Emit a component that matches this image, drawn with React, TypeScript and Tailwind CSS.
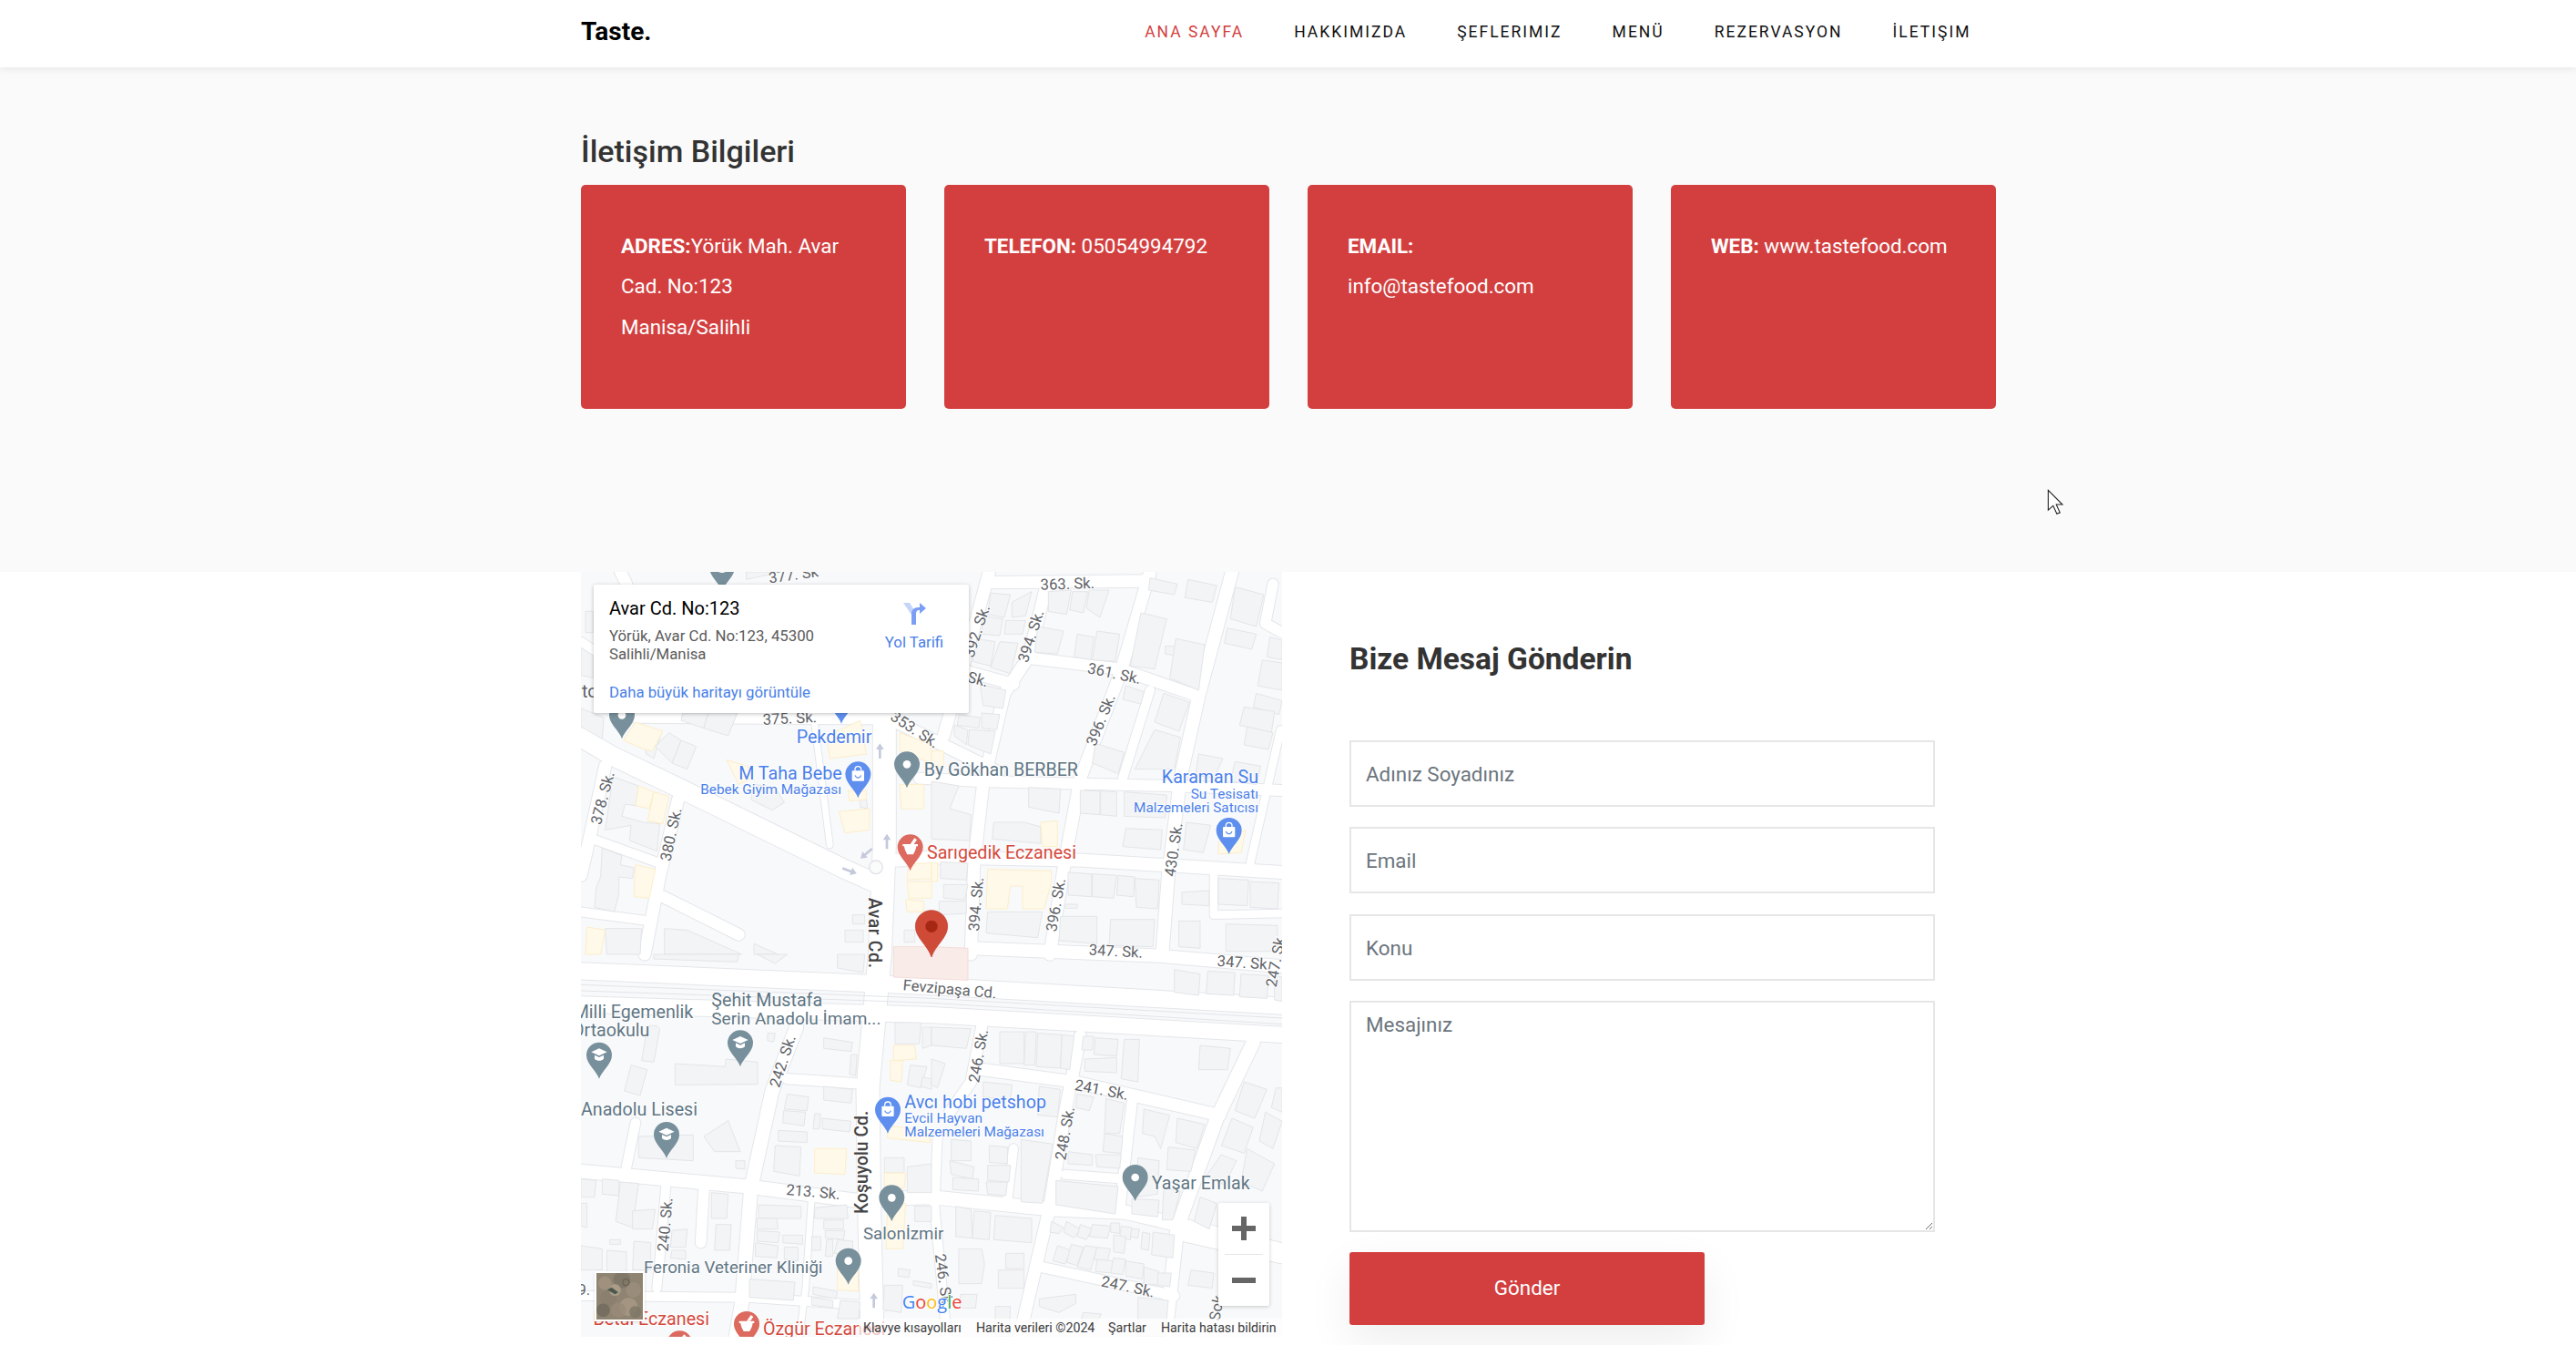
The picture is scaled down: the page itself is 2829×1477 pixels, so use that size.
import React from "react";

const gray = "#f3f4f6";
type P = number[];
const Q1: P[] = [
  [15,130,40,130,40,200,15,200],[0,250,40,275,40,350,0,340],[0,450,40,465,75,480,70,550,0,510],
  [210,565,265,530,240,615,215,600],[245,575,290,530,330,555,300,630],[300,630,330,555,380,575,350,650],
  [335,465,420,465,405,515,330,490],[405,515,420,465,515,465,485,540],[570,700,640,710,670,760,630,785,560,750],
  [105,675,190,705,180,770,145,765,135,805,205,825,260,830,250,920,160,885,165,835,80,850],
  [70,910,135,935,130,965,175,975,170,1010,125,1005,125,1060,110,1120,45,1105,50,1040,65,1005],
  [275,1175,350,1180,530,1260,275,1260],[570,1225,650,1260,570,1260],[80,1175,200,1175,195,1260,85,1260],
  [895,1130,935,1130,935,1160,895,1160],[870,1180,930,1180,930,1220,870,1220],[1065,1180,1100,1180,1100,1220,1065,1220],
  [920,750,940,750,945,780,920,775],[545,0,660,0,545,25],
];
const Q1Y: P[] = [
  [140,555,180,495,270,525,235,590,210,585],[190,705,240,725,225,780,180,770],[240,725,290,740,270,830,220,820],
  [180,965,245,980,225,1075,175,1070],[20,1170,80,1180,65,1260,15,1260],[810,540,920,490,940,600,820,615],
  [1050,530,1155,570,1155,630,1050,590],[480,620,550,640,560,680,520,700],[880,720,940,720,940,750,885,755],
  [850,790,950,780,950,850,870,860],[1050,700,1130,700,1130,780,1055,780],[1080,960,1155,960,1155,1010,1075,1015],
  [1075,1020,1155,1020,1155,1075,1080,1075],[1070,1080,1130,1085,1130,1120,1075,1120],
];
const Q2: P[] = [
  [195,70,260,75,240,150,185,140],[170,145,235,155,225,210,165,205],[265,100,330,65,310,145,265,150],[245,160,310,160,300,205,240,205],
  [150,220,210,230,195,310,135,295],[225,230,285,235,260,335,195,315],[385,65,460,60,445,140,385,130],[465,65,515,65,500,135,455,125],
  [520,60,585,60,555,150,510,120],[350,180,435,195,415,270,340,265],[480,205,535,215,525,290,470,280],[545,195,620,205,605,295,530,290],
  [690,135,775,155,735,320,655,310],[720,20,810,40,800,75,715,60],[845,25,940,45,925,100,835,85],[770,245,800,245,800,275,770,270],
  [805,220,900,240,880,390,785,350],[1000,50,1095,75,1070,180,985,155],[975,185,1070,205,1055,255,965,235],[1115,215,1155,225,1155,290,1105,280],
  [1090,290,1155,300,1155,390,1075,375],[1070,400,1155,425,1145,470,1060,445],[1030,445,1060,450,1130,460,1120,530,1015,505],[1040,510,1125,530,1110,585,1030,570],
  [640,375,700,395,690,435,630,420],[765,400,850,430,815,525,735,495],[735,520,820,545,800,650,670,650],[540,565,635,595,615,665,530,630],
  [160,370,245,390,235,450,170,440],[90,470,160,480,155,515,85,505],[165,465,225,470,215,520,165,515],[75,505,120,520,115,570,75,540],[125,520,210,525,195,600,120,570],
  [880,600,960,615,930,680,870,670],[1000,625,1085,640,1070,700,985,690],[320,710,425,715,420,795,320,775],[490,720,555,722,555,800,490,795],[557,722,610,725,610,805,557,800],[635,725,775,735,770,810,635,805],
  [205,825,305,825,360,840,360,895,200,880],[640,845,760,850,755,915,630,905],[840,825,920,835,895,925,830,915],
  [30,955,120,960,115,1015,30,1010],[40,1030,120,1030,110,1080,40,1075],[25,1085,115,1085,115,1125,25,1130],
  [450,990,527,995,527,1070,450,1065],[530,995,610,1000,600,1075,530,1070],[615,1000,670,1005,665,1070,610,1065],[670,1010,750,1015,745,1110,675,1105],
  [425,1135,545,1135,545,1225,420,1215],[590,1145,735,1145,730,1235,585,1230],[825,1055,915,1050,915,1100,825,1095],[815,1150,885,1150,885,1240,815,1235],
  [945,1010,1045,1015,1040,1100,945,1095],[1050,1020,1145,1025,1140,1110,1050,1105],[970,1160,1140,1165,1140,1250,970,1250],[185,1120,365,1120,350,1205,180,1190],
  [0,690,90,705,60,780,130,800,125,885,0,880],[440,1095,480,1095,480,1108,440,1108],
];
const Q2Y: P[] = [
  [360,825,415,820,415,905,365,905],[0,590,40,590,40,640,0,640],
  [185,980,395,985,395,1025,370,1110,300,1110,300,1035,260,1035,250,1110,180,1110],[945,890,1035,850,1020,925,945,930],
  [0,958,20,958,20,1020,0,1020],
];
const Q3: P[] = [
  [240,0,520,0,515,25,240,15],[580,0,680,0,640,30],[845,0,935,0,930,60,845,45],
  [165,365,218,380,195,465,143,450],[220,235,250,235,260,245,240,355,200,350],[310,360,475,370,478,345,582,355,582,428,310,430],
  [615,260,640,260,635,288,615,285],[190,600,370,595,370,680,190,670],[405,600,485,548,525,650,440,650],[510,680,540,680,540,708,510,705],
  [800,275,895,290,890,320,800,310],[890,330,910,330,905,400,885,395],[680,460,750,470,745,515,670,510],[668,515,740,520,735,565,665,555],
  [800,435,895,445,890,490,800,480],[770,525,790,525,785,575,765,575],[795,540,890,550,885,585,795,575],[650,580,745,585,745,620,650,615],[640,630,725,635,720,730,635,715],
  [0,740,50,745,45,800,0,800],[70,740,125,745,125,795,70,790],[130,750,190,755,170,900,115,880],[170,845,245,840,235,905,170,905],[0,820,20,820,20,900,0,895],
  [300,910,350,905,345,965,295,965],[300,975,345,975,345,1005,295,1000],[430,785,485,790,480,870,430,870],[445,890,495,890,490,975,440,975],[95,940,130,940,130,955,95,955],
  [0,960,70,970,70,1040,0,1040],[85,975,150,980,150,1060,85,1050],[175,945,230,950,230,1040,170,1040],
  [585,825,725,830,725,870,585,870],[580,870,645,870,650,905,580,905],[580,910,655,915,650,950,580,945],[665,925,730,925,730,955,665,950],[575,950,650,960,645,1000,575,995],[670,965,715,965,715,1010,670,1005],
  [770,835,875,825,880,870,770,870],[800,875,865,875,865,905,800,905],[805,910,870,910,865,940,805,935],[760,930,790,930,790,975,760,975],[810,940,830,940,830,995,805,995],[845,940,895,945,895,990,835,985],
  [555,1070,705,1080,700,1140,555,1130],[765,1095,845,1110,840,1135,765,1120],[760,1130,830,1140,830,1165,760,1155],[855,1140,920,1145,915,1200,845,1200],
  [1000,1090,1060,1090,1055,1180,995,1170],[1045,1035,1085,1040,1080,1065,1045,1060],[1095,1075,1155,1085,1155,1100,1095,1090],
  [1035,225,1120,225,1115,295,1035,295],[1125,240,1155,240,1155,300,1125,310],[1085,365,1140,370,1120,440,1075,430],[1125,405,1155,410,1155,445,1120,435],
  [1000,670,1065,670,1065,720,1000,720],[1075,700,1155,690,1155,785,1075,785],[1100,830,1155,830,1155,880,1100,880],
];
const Q3Y: P[] = [
  [1030,300,1100,300,1105,345,1030,350],[1020,350,1060,350,1055,420,1020,415],[770,640,875,640,870,725,770,720],[1010,565,1150,580,1150,620,1010,605],
  [1000,720,1070,720,1065,770,1000,770],[1010,820,1070,820,1060,970,1005,970],[845,985,910,985,915,1110,845,1105],
];
const Q4: P[] = [
  [0,345,45,360,20,440,0,430],[170,420,265,430,260,480,170,470],[355,435,425,445,415,535,350,530],
  [225,255,305,255,305,360,225,360],[310,255,345,255,340,365,305,365],[350,260,430,265,425,375,345,370],[430,265,470,270,455,380,425,375],[0,240,130,245,115,310,0,300],
  [500,270,535,270,530,315,495,315],[540,275,615,280,610,335,535,330],[505,345,610,340,610,390,505,385],[635,280,685,280,680,420,625,410],[885,300,985,310,975,380,880,380],
  [480,460,535,470,520,515,475,505],[575,475,635,490,620,590,570,590],[570,590,630,600,625,655,565,650],[540,660,625,660,620,705,545,700],[450,650,530,660,530,695,450,690],
  [700,510,785,530,755,640,735,600,695,590],[810,540,900,560,875,640,805,620],[780,635,870,645,855,715,775,710],[680,670,750,680,745,790,670,800],[660,805,750,810,745,865,660,855],[765,770,820,780,795,875,760,875],
  [1030,420,1105,445,1065,540,1000,515],[990,540,1060,570,1030,655,955,630],[955,660,1005,680,965,760,905,730],[1040,640,1130,690,1090,780,1020,750],[1100,520,1155,550,1125,640,1080,615],[1135,440,1155,440,1155,520,1120,505],[885,800,940,820,915,905,865,880],
  [410,745,615,765,605,855,410,825],[65,610,130,615,130,680,65,680],[60,680,140,700,135,740,65,725],[70,735,155,740,155,780,70,775],[190,630,250,635,250,690,190,685],[185,695,260,695,255,750,185,745],[180,750,250,750,245,795,185,790],[295,610,400,625,365,820,295,815],
  [80,830,130,840,135,935,80,930],[140,845,195,850,190,940,135,935],[210,860,330,870,330,950,205,940],[90,970,165,970,175,1020,165,1085,90,1085],[220,1040,305,1040,305,1100,220,1100],[245,985,305,985,305,1035,245,1035],
  [395,880,435,900,420,920,390,915],[445,880,490,905,470,935,435,915],[490,890,530,905,510,940,480,930],[530,890,590,895,580,935,520,930],[590,885,620,885,620,920,590,915],[625,895,660,900,655,940,620,935],[660,905,685,905,680,935,655,930],[695,915,720,920,715,975,690,970],[730,915,800,925,795,1000,725,990],
  [415,960,460,975,440,1020,400,1010],[460,955,500,965,480,1025,445,1015],[505,960,545,965,525,1040,480,1030],[545,965,590,970,580,1010,535,1005],[600,925,640,930,635,985,600,980],[545,1005,600,1010,595,1050,540,1045],[600,1000,640,1005,630,1055,590,1050],[640,1010,700,1020,695,1070,640,1060],[700,1030,750,1045,750,1090,700,1085],[745,1050,790,1050,785,1095,745,1090],
  [855,1040,930,1050,925,1100,845,1090],[355,1135,475,1120,475,1150,420,1180,355,1160],[500,1180,560,1185,530,1235,490,1220],[95,1120,150,1120,145,1165,95,1165],[210,1160,260,1160,255,1260,210,1260],
  [800,50,885,65,880,135,800,125],[910,55,1000,60,995,135,905,130],[1020,65,1110,70,1105,145,1015,140],[1130,70,1155,75,1155,155,1130,150],[680,1130,780,1140,770,1260,680,1260],
];

type Road = [number, number[]];
const H = 1155, V = 1260;
const sh = (dx: number, dy: number, pts: number[]) => pts.map((v, i) => (i % 2 ? v + dy : v + dx));
const roads: Road[] = [
  [75, [1000,470,1000,900,985,1260,945,1700,950,2100,960,2520]],
  [62, [0,545,100,605,330,715,870,980,960,1020]],
  [40, [80,640,30,870,0,1000]],
  [40, [320,750,260,1000,210,1260]],
  [30, [40,880,260,960]],
  [38, [270,1070,520,1195]],
  [30, [0,1120,225,1150]],
  [38, [130,0,150,40]],
  [30, [0,230,45,260]],
  [20, [770,500,820,900]],
  [45, [180,475,1000,480]],
  [40, sh(H,0,[-145,480,220,660])],
  [40, sh(H,0,[180,35,720,30])],
  [40, sh(H,0,[380,40,320,280,240,400,170,700,140,960,130,1260])],
  [40, sh(H,0,[190,0,130,220,40,540])],
  [38, sh(H,0,[125,330,270,370])],
  [38, sh(H,0,[330,285,620,320,880,410])],
  [40, sh(H,0,[720,0,620,340,490,680,440,950,390,1260])],
  [30, sh(H,0,[720,390,630,680])],
  [42, sh(H,0,[990,0,880,410,820,680,780,1000,760,1260])],
  [36, sh(H,0,[-40,680,160,690,790,705,1155,720])],
  [42, sh(H,0,[-115,950,0,940,500,950,1155,990])],
  [34, sh(H,0,[1125,40,1100,170,1155,200])],
  [26, sh(H,0,[1150,520,1050,960])],
  [26, sh(H,0,[930,990,930,1130,1155,1125])],
  [42, sh(H,0,[130,1240,750,1265,1155,1300])],
  [55, [0,1315,1155,1365,2310,1430]],
  [52, [0,1425,1155,1460,2310,1525]],
  [45, sh(0,V,[710,240,630,450,560,770,530,1150,510,1260])],
  [45, sh(0,V,[0,715,550,765,900,810,1155,800,1555,840,1795,850,2095,920,2310,975])],
  [34, sh(0,V,[680,410,900,425])],
  [32, sh(0,V,[180,555,150,700])],
  [30, sh(0,V,[280,760,260,1000,250,1100])],
  [35, sh(0,V,[405,770,395,950])],
  [30, sh(0,V,[0,1125,550,1130,1000,1160])],
  [20, sh(0,V,[760,800,740,1100,720,1260])],
  [40, sh(H,V,[170,380,470,420,950,530])],
  [36, sh(H,V,[165,240,130,420,60,520])],
  [30, sh(H,V,[20,600,10,830,50,1260])],
  [40, sh(H,V,[490,270,440,520,390,830,290,1260])],
  [34, sh(H,V,[660,490,620,840])],
  [45, sh(H,V,[1060,290,940,540,810,900,770,1260])],
  [30, sh(H,V,[440,725,640,740])],
  [30, sh(H,V,[270,640,250,810])],
  [34, sh(H,V,[360,1030,800,1125])],
  [36, sh(H,V,[840,930,1155,1000])],
];

const Polys = ({ list, dx, dy, fill, stroke }: { list: P[]; dx: number; dy: number; fill: string; stroke: string }) => (
  <g fill={fill} stroke={stroke} strokeWidth={3} transform={`translate(${dx},${dy})`}>
    {list.map((p, i) => <polygon key={i} points={p.join(" ")} />)}
  </g>
);

const pinPath = "M0 78C-8 52 -42 30 -42 0A42 42 0 1 1 42 0C42 30 8 52 0 78Z";
type Kind = "dot" | "cap" | "bag" | "mortar";
const Pin = ({ x, y, color, kind }: { x: number; y: number; color: string; kind: Kind }) => (
  <g transform={`translate(${x},${y})`}>
    <path d={pinPath} fill={color} />
    {kind === "dot" && <circle r={13} fill="#fff" />}
    {kind === "cap" && (
      <g fill="#fff">
        <polygon points="-26,-10 0,-22 26,-10 0,2" />
        <path d="M-15 0L0 7L15 0V12C8 20 -8 20 -15 12Z" />
      </g>
    )}
    {kind === "bag" && (
      <g>
        <path d="M-10 -12V-16A10 10 0 0 1 10 -16V-12" fill="none" stroke="#fff" strokeWidth={4} />
        <rect x={-20} y={-12} width={40} height={34} rx={3} fill="#fff" />
        <path d="M-10 3C-6 14 6 14 10 3" fill="none" stroke={color} strokeWidth={3.5} />
      </g>
    )}
    {kind === "mortar" && (
      <g fill="#fff">
        <path d="M-25 -10H25V-3H20C18 12 12 18 10 24H-10C-12 18 -18 12 -20 -3H-25Z" />
        <path d="M0 -10L14 -30L22 -24L12 -10Z" />
      </g>
    )}
  </g>
);

const L = ({ x, y, s = 59, c, t, a = "start", w = 400 }: { x: number; y: number; s?: number; c: string; t: string; a?: "start" | "end" | "middle"; w?: number }) => (
  <text x={x} y={y} fontSize={s} fill={c} textAnchor={a} fontWeight={w} stroke="#fff" strokeWidth={6} strokeOpacity={0.75} paintOrder="stroke">{t}</text>
);
const St = ({ x, y, r, t, s = 50, w = 400, c = "#5f6368", ls = 0 }: { x: number; y: number; r: number; t: string; s?: number; w?: number; c?: string; ls?: number }) => (
  <text transform={`translate(${x},${y}) rotate(${r})`} textAnchor="middle" dominantBaseline="central" fontSize={s} fontWeight={w} fill={c} letterSpacing={ls} stroke="#fff" strokeWidth={6} strokeOpacity={0.8} paintOrder="stroke">{t}</text>
);

const blue = "#4a80ea", slate = "#5f7684", red = "#d5493c";
const pGray = "#78909c", pBlue = "#5e8fee", pRed = "#dc6a5e";

const Arrow = ({ x, y, r }: { x: number; y: number; r: number }) => (
  <path transform={`translate(${x},${y}) rotate(${r})`} d="M0 -25L13 -5H4V25H-4V-5H-13Z" fill="#c4c9dc" />
);

function MapCanvas() {
  return (
    <svg viewBox="0 0 2310 2520" width={770} height={840} className="block absolute inset-0">
      <rect width={2310} height={2520} fill="#f8f9fb" />
      <g fill="none" strokeLinejoin="round" strokeLinecap="round">
        {roads.map(([w, p], i) => <polyline key={i} points={p.join(" ")} stroke="#e4e6ea" strokeWidth={w + 6} />)}
        {roads.map(([w, p], i) => <polyline key={i} points={p.join(" ")} stroke="#ffffff" strokeWidth={w} />)}
      </g>
      <g fill="none" stroke="#e2e4e8" strokeWidth={3}>
        <polyline points="0,1360 1155,1405 2310,1470" />
        <polyline points="0,1380 1155,1420 2310,1490" />
      </g>
      <Polys list={Q1} dx={0} dy={0} fill={gray} stroke="#e3e5e8" />
      <Polys list={Q2} dx={H} dy={0} fill={gray} stroke="#e3e5e8" />
      <Polys list={Q3} dx={0} dy={V} fill={gray} stroke="#e3e5e8" />
      <Polys list={Q4} dx={H} dy={V} fill={gray} stroke="#e3e5e8" />
      <Polys list={Q1Y} dx={0} dy={0} fill="#fff9ea" stroke="#fdeec8" />
      <Polys list={Q2Y} dx={H} dy={0} fill="#fff9ea" stroke="#fdeec8" />
      <Polys list={Q3Y} dx={0} dy={V} fill="#fff9ea" stroke="#fdeec8" />
      <polygon points="1030,1235 1155,1235 1275,1240 1275,1345 1030,1335" fill="#f8ebe8" stroke="#f3dcd7" strokeWidth={3} />

      <Arrow x={985} y={590} r={0} />
      <Arrow x={1008} y={888} r={0} />
      <Arrow x={965} y={2400} r={0} />
      <Arrow x={940} y={928} r={-130} />
      <Arrow x={885} y={985} r={110} />
      <circle cx={972} cy={973} r={22} fill="#fbfbfc" stroke="#dfe1e5" strokeWidth={4} />

      <St x={688} y={483} r={-3} t="375. Sk." />
      <St x={1100} y={520} r={33} t="353. Sk." />
      <St x={72} y={745} r={-75} t="378. Sk." />
      <St x={297} y={865} r={-78} t="380. Sk." />
      <St x={968} y={1190} r={90} t="Avar Cd." s={58} w={500} c="#444" ls={2} />
      <St x={700} y={10} r={-8} t="377. Sk" />
      <St x={1603} y={40} r={-2} t="363. Sk." />
      <St x={1305} y={195} r={-72} t="392. Sk." />
      <St x={1483} y={212} r={-72} t="394. Sk." />
      <St x={1757} y={335} r={12} t="361. Sk." />
      <St x={1255} y={340} r={15} t="360. Sk." />
      <St x={1713} y={488} r={-68} t="396. Sk." />
      <St x={1953} y={915} r={-82} t="430. Sk." />
      <St x={1302} y={1095} r={-85} t="394. Sk." />
      <St x={1565} y={1097} r={-80} t="396. Sk." />
      <St x={1762} y={1250} r={3} t="347. Sk." />
      <St x={2185} y={1288} r={4} t="347. Sk." />
      <St x={2290} y={1280} r={-80} t="247. Sk." />
      <St x={1215} y={1375} r={5} t="Fevzipaşa Cd." />
      <St x={665} y={1612} r={-72} t="242. Sk." />
      <St x={278} y={2150} r={-85} t="240. Sk." />
      <St x={765} y={2043} r={5} t="213. Sk." />
      <St x={925} y={1945} r={-90} t="Koşuyolu Cd." s={58} w={500} c="#444" />
      <St x={1310} y={1595} r={-80} t="246. Sk." />
      <St x={1715} y={1707} r={11} t="241. Sk." />
      <St x={1595} y={1850} r={-80} t="248. Sk." />
      <St x={1802} y={2355} r={12} t="247. Sk." />
      <St x={1195} y={2335} r={82} t="246. Sk." />
      <St x={2095} y={2425} r={-80} t="Sok" />
      <St x={10} y={2365} r={0} t="9." />

      <L x={3} y={413} c="#5f6368" t="to" />
      <L x={710} y={565} c={blue} t="Pekdemir" />
      <L x={860} y={685} c={blue} t="M Taha Bebe" a="end" />
      <L x={858} y={733} s={46} c={blue} t="Bebek Giyim Mağazası" a="end" />
      <L x={1130} y={672} c={slate} t="By Gökhan BERBER" />
      <L x={1140} y={945} c={red} t="Sarıgedik Eczanesi" />
      <L x={2232} y={697} c={blue} t="Karaman Su" a="end" />
      <L x={2232} y={747} s={46} c={blue} t="Su Tesisatı" a="end" />
      <L x={2232} y={793} s={46} c={blue} t="Malzemeleri Satıcısı" a="end" />
      <L x={-25} y={1470} c={slate} t="Milli Egemenlik" />
      <L x={-30} y={1530} c={slate} t="Ortaokulu" />
      <L x={430} y={1432} c={slate} t="Şehit Mustafa" />
      <L x={430} y={1492} s={57} c={slate} t="Serin Anadolu İmam..." />
      <L x={0} y={1792} c={slate} t="Anadolu Lisesi" />
      <L x={1066} y={1767} c={blue} t="Avcı hobi petshop" />
      <L x={1066} y={1814} s={46} c={blue} t="Evcil Hayvan" />
      <L x={1066} y={1860} s={46} c={blue} t="Malzemeleri Mağazası" />
      <L x={1880} y={2035} c={slate} t="Yaşar Emlak" />
      <L x={930} y={2200} s={56} c={slate} t="Salonİzmir" />
      <L x={207} y={2310} s={56} c={slate} t="Feronia Veteriner Kliniği" />
      <L x={423} y={2482} c={red} t="Betül Eczanesi" a="end" />
      <L x={600} y={2515} c={red} t="Özgür Eczanesi" />

      <Pin x={465} y={-15} color={pGray} kind="cap" />
      <Pin x={135} y={472} color={pGray} kind="dot" />
      <Pin x={858} y={422} color={pBlue} kind="bag" />
      <Pin x={913} y={667} color={pBlue} kind="bag" />
      <Pin x={1074} y={634} color={pGray} kind="dot" />
      <Pin x={1085} y={907} color={pRed} kind="mortar" />
      <Pin x={2135} y={852} color={pBlue} kind="bag" />
      <Pin x={60} y={1592} color={pGray} kind="cap" />
      <Pin x={525} y={1552} color={pGray} kind="cap" />
      <Pin x={282} y={1854} color={pGray} kind="cap" />
      <Pin x={1011} y={1772} color={pBlue} kind="bag" />
      <Pin x={1826} y={1995} color={pGray} kind="dot" />
      <Pin x={1024} y={2062} color={pGray} kind="dot" />
      <Pin x={881} y={2270} color={pGray} kind="dot" />
      <Pin x={546} y={2478} color={pRed} kind="mortar" />
      <Pin x={325} y={2542} color={pRed} kind="mortar" />

      <g transform="translate(1155,1168)">
        <path d="M0 101C-12 62 -53 38 -53 0A53 53 0 1 1 53 0C53 38 12 62 0 101Z" fill="#d04b37" stroke="#b93a28" strokeWidth={2} />
        <circle r={20} fill="#a52714" />
      </g>

      <text x={1058} y={2428} fontSize={60} fontWeight={500} fontFamily="'Open Sans',sans-serif" stroke="#fff" strokeWidth={5} paintOrder="stroke">
        <tspan fill="#4285f4">G</tspan><tspan fill="#ea4335">o</tspan><tspan fill="#fbbc05">o</tspan><tspan fill="#4285f4">g</tspan><tspan fill="#34a853">l</tspan><tspan fill="#ea4335">e</tspan>
      </text>
    </svg>
  );
}

function Satellite() {
  const specks = [
    [10,12,8,"#a3957f"],[30,8,10,"#7d7466"],[44,20,9,"#9c8f7c"],[14,30,10,"#8a806e"],[38,40,11,"#a89a84"],[8,44,8,"#6f6a5c"],[26,44,9,"#9a8a78"],[46,46,7,"#7c7767"],[22,20,7,"#b0a28e"],
  ] as [number, number, number, string][];
  return (
    <svg viewBox="0 0 55 55" width={55} height={55} className="absolute left-[15px] top-[768px] border-2 border-white shadow-sm">
      <rect width={55} height={55} fill="#8f8472" />
      {specks.map(([x, y, r, c], i) => <circle key={i} cx={x} cy={y} r={r} fill={c} opacity={0.8} />)}
      <path d="M13 20L22 25L26 23L18 17Z" fill="#4c574e" />
      <circle cx={35} cy={11} r={4} fill="none" stroke="#5f5a4d" strokeWidth={1} />
    </svg>
  );
}

function GoogleMap() {
  return (
    <div className="relative w-[770px] h-[840px] shrink-0 overflow-hidden">
      <MapCanvas />
      <div className="absolute left-[14px] top-[14px] w-[412px] h-[141px] bg-white rounded-[2px] shadow-[0_1px_4px_rgba(0,0,0,0.25)] pl-[17px] pt-[12px]">
        <div className="text-[20px] leading-[29px] font-normal text-black">Avar Cd. No:123</div>
        <div className="text-[16.8px] leading-[20px] text-[#5b5b5b] mt-[5px] w-[240px]">Yörük, Avar Cd. No:123, 45300 Salihli/Manisa</div>
        <div className="text-[16.8px] leading-[20px] text-[#4a7fe8] mt-[22px]">Daha büyük haritayı görüntüle</div>
        <div className="absolute left-[304px] top-[19px] w-[96px] flex flex-col items-center">
          <svg viewBox="0 0 26 26" width={26} height={26}>
            <path d="M1 1H8L15 12V25H10V14Z" fill="#c5d5fa" />
            <path d="M10 25V13C10 9 13 6 17 6H19V1L26 7L19 13V9H18C16 9 15 11 15 13V25Z" fill="#7c9ff5" />
          </svg>
          <div className="text-[16.8px] leading-[20px] text-[#4a7fe8] mt-[8px]">Yol Tarifi</div>
        </div>
      </div>
      <div className="absolute left-[700px] top-[693px] w-[56px] h-[113px] bg-white rounded-[2px] shadow-[0_1px_4px_rgba(0,0,0,0.2)] flex flex-col items-center">
        <div className="h-[56px] flex items-center justify-center">
          <svg viewBox="0 0 26 26" width={26} height={26}><path d="M10 0H16V10H26V16H16V26H10V16H0V10H10Z" fill="#666" /></svg>
        </div>
        <div className="w-[42px] h-px bg-[#e6e6e6]" />
        <div className="h-[56px] flex items-center justify-center">
          <svg viewBox="0 0 26 6" width={26} height={6}><rect width={26} height={6} fill="#666" /></svg>
        </div>
      </div>
      <Satellite />
      <div className="absolute left-[305px] right-0 top-[820px] h-[20px] bg-white/70 text-[14.2px] leading-[21px] text-[#3c3c3c]">
        <span className="absolute left-[5px]">Klavye kısayolları</span>
        <span className="absolute left-[129px]">Harita verileri ©2024</span>
        <span className="absolute left-[274px]">Şartlar</span>
        <span className="absolute left-[332px]">Harita hatası bildirin</span>
      </div>
    </div>
  );
}

const navItems = ["ANA SAYFA", "HAKKIMIZDA", "ŞEFLERIMIZ", "MENÜ", "REZERVASYON", "İLETIŞIM"];

function Card({ children }: { children: React.ReactNode }) {
  return <div className="h-[246px] bg-[#d33f3f] rounded-[5px] pt-[45px] px-[44px] text-white text-[22.4px] leading-[44.3px]">{children}</div>;
}

const inputCls = "block w-full h-[73px] border-2 border-[#e6e6e6] bg-white px-[16px] text-[22.4px] outline-none placeholder:text-[#6c757d]";

export default function App() {
  return (
    <div className="relative h-[1477px] w-[2829px] overflow-hidden bg-white [font-family:Roboto,sans-serif] text-[#333]">
      <header className="relative z-10 h-[74px] bg-white shadow-[0_2px_8px_rgba(0,0,0,0.08)]">
        <div className="ml-[638px] w-[1554px] h-full flex items-center justify-between pb-[4px]">
          <div className="text-[28px] font-bold text-black">Taste.</div>
          <nav className="flex">
            {navItems.map((n, i) => (
              <a key={n} className={`px-[27.5px] text-[17.5px] font-normal tracking-[2px] ${i === 0 ? "text-[#d33f3f]" : "text-[#111]"}`}>{n}</a>
            ))}
          </nav>
        </div>
      </header>

      <section className="h-[554px] bg-[#fafafa]">
        <div className="ml-[638px] w-[1554px] pt-[68px]">
          <h2 className="text-[34px] leading-[48px] font-medium text-[#333] mb-[13px]">İletişim Bilgileri</h2>
          <div className="grid grid-cols-4 gap-[42px]">
            <Card><b>ADRES:</b>Yörük Mah. Avar Cad. No:123 Manisa/Salihli</Card>
            <Card><b>TELEFON:</b> 05054994792</Card>
            <Card><b>EMAIL:</b> info@tastefood.com</Card>
            <Card><b>WEB:</b> www.tastefood.com</Card>
          </div>
        </div>
      </section>

      <section className="ml-[638px] flex">
        <GoogleMap />
        <div className="ml-[74px] w-[643px]">
          <h3 className="text-[33.5px] leading-[48px] font-bold text-[#333] pt-[72px] box-content">Bize Mesaj Gönderin</h3>
          <form className="mt-[65px] flex flex-col gap-[22px]">
            <input className={inputCls} placeholder="Adınız Soyadınız" />
            <input className={inputCls} placeholder="Email" />
            <input className={`${inputCls} mt-[1px]`} placeholder="Konu" />
            <textarea className="block w-full h-[254px] border-2 border-[#e6e6e6] bg-white px-[16px] py-[8px] text-[22.4px] outline-none placeholder:text-[#6c757d]" placeholder="Mesajınız" />
            <button type="button" className="w-[390px] h-[80px] bg-[#d33f3f] rounded-[3px] text-white text-[22.4px] font-normal shadow-[0_18px_50px_rgba(0,0,0,0.07)]">Gönder</button>
          </form>
        </div>
      </section>

      <svg viewBox="0 0 14 22" width={19} height={30} className="absolute left-[2248px] top-[537px]">
        <path d="M1 1V17L5 13.5L8 20L10.5 19L7.5 12.5H12.5Z" fill="#fff" stroke="#222" strokeWidth={0.8} />
      </svg>
    </div>
  );
}
